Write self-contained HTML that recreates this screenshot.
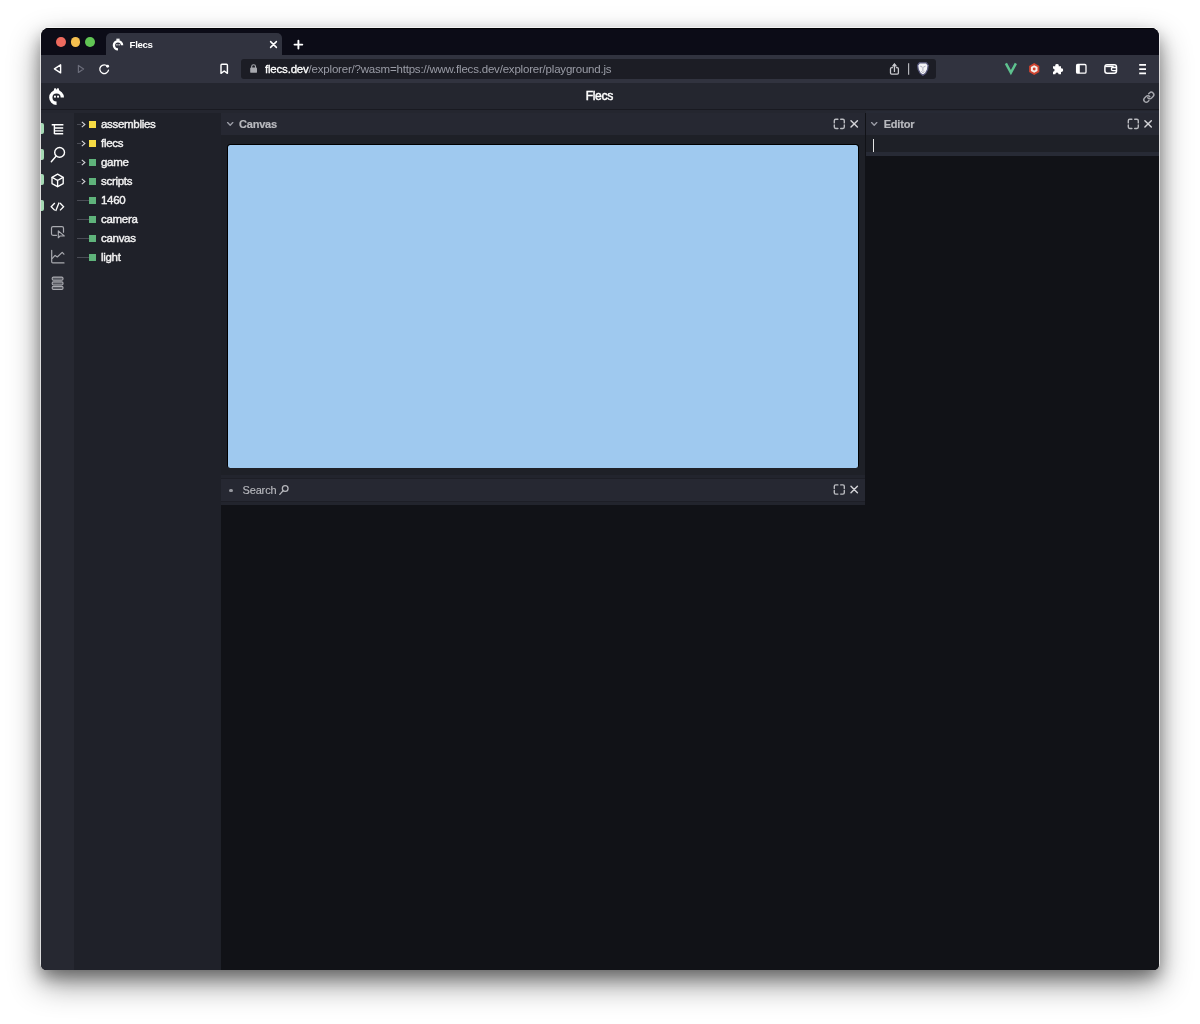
<!DOCTYPE html>
<html lang="en">
<head>
<meta charset="utf-8">
<title>Flecs</title>
<style>
*{box-sizing:border-box;margin:0;padding:0}
html,body{width:1200px;height:1024px;background:#fff;overflow:hidden}
body{position:relative;font-family:"Liberation Sans",sans-serif;color:#e6e6e6}
.abs{position:absolute}
#shadow{position:absolute;left:41px;top:28px;width:1118px;height:941px;border-radius:8px 8px 5.5px 5.5px;
 box-shadow:0 0 0 1px rgba(255,255,255,.62),0 8px 16px rgba(0,0,0,.35),0 14px 32px rgba(0,0,0,.45);}
#win{will-change:transform;position:absolute;left:41px;top:28px;width:1118px;height:941.5px;border-radius:8px 8px 5.5px 5.5px;overflow:hidden;background:#111217}
/* browser chrome */
#tabbar{position:absolute;left:0;top:0;width:1118px;height:27px;background:#0c0c17;border-top:1px solid #020204}
.tl{position:absolute;top:9.3px;width:9.8px;height:9.8px;border-radius:50%}
#tab{position:absolute;left:65.3px;top:5.2px;width:176px;height:22.3px;background:#31333f;border-radius:5px 5px 0 0}
#tabtitle{position:absolute;left:88.6px;top:10.4px;font-size:9.7px;font-weight:700;color:#fff;line-height:13px;letter-spacing:-.35px}
#toolbar{position:absolute;left:0;top:26.8px;width:1118px;height:27.9px;background:#31333f}
#url{position:absolute;left:200px;top:31px;width:695px;height:19.6px;background:#1c1d25;border-radius:3px}
#urltext{position:absolute;left:224px;top:34.5px;font-size:11.5px;line-height:13px;color:#9a9ca6;white-space:nowrap;letter-spacing:-.2px}
#urltext b{color:#fff;font-weight:400;-webkit-text-stroke:.3px #fff}
/* app */
#apphead{position:absolute;left:0;top:54px;width:1118px;height:32px;background:#24262f}
#appline{position:absolute;left:0;top:81.3px;width:1118px;height:1.1px;background:#191a21}
#apptitle{position:absolute;left:-.7px;width:1118px;top:61px;text-align:center;font-size:12.2px;line-height:14px;color:#fff;letter-spacing:-.35px;-webkit-text-stroke:.45px #fff}
#strip{position:absolute;left:0;top:84.6px;width:33px;height:860px;background:#262831}
#tree{position:absolute;left:33px;top:84.6px;width:147px;height:860px;background:#1f2129}
#main{position:absolute;left:180px;top:82.5px;width:938px;height:860px;background:#111217}
.pill{position:absolute;left:0;width:3px;height:11px;background:#a5d9b4;border-radius:0 2px 2px 0}
.row{position:absolute;left:60px;font-size:11.5px;line-height:14px;color:#f2f2f2;white-space:nowrap;letter-spacing:-.3px;-webkit-text-stroke:.4px #f2f2f2}
.sq{position:absolute;left:48px;width:7px;height:7px}
.ln{position:absolute;left:36px;height:1px;background:#4a4c55}
.band{position:absolute;background:#22242d}
.phead{position:absolute;background:#262832;height:22px}
.ptitle{position:absolute;font-size:11px;line-height:13px;font-weight:700;color:#b8b9be;white-space:nowrap;letter-spacing:-.2px;-webkit-text-stroke:.2px #b8b9be}
.pbody{position:absolute;background:#1e2027}
svg{position:absolute;overflow:visible}
</style>
</head>
<body>
<div id="shadow"></div>
<div id="win">
  <div id="apphead"></div>
  <div id="tabbar"></div>
  <div class="tl" style="left:14.9px;background:#ed6a5e"></div>
  <div class="tl" style="left:29.7px;background:#f5bf4f"></div>
  <div class="tl" style="left:44.4px;background:#61c554"></div>
  <div id="tab"></div>
  <div id="tabtitle">Flecs</div>
  <div id="toolbar"></div>
  <div id="url"></div>
  <div id="urltext"><b>flecs.dev</b>/explorer/?wasm=https://www.flecs.dev/explorer/playground.js</div>

  <div id="appline"></div>
  <div id="apptitle">Flecs</div>

    <div id="strip"></div>
  <div id="tree"></div>
  <div class="ln" style="top:95.95px;width:3.6px"></div>
  <svg style="left:40px;top:93.15px" width="5" height="7" viewBox="0 0 5 7"><path d="M0.8 0.9 L3.9 3.5 L0.8 6.1" fill="none" stroke="#d4d4d8" stroke-width="1.1"/></svg>
  <div class="sq" style="top:93.15px;background:#f6db44"></div>
  <div class="row" style="top:89.05px">assemblies</div>
  <div class="ln" style="top:114.98px;width:3.6px"></div>
  <svg style="left:40px;top:112.18px" width="5" height="7" viewBox="0 0 5 7"><path d="M0.8 0.9 L3.9 3.5 L0.8 6.1" fill="none" stroke="#d4d4d8" stroke-width="1.1"/></svg>
  <div class="sq" style="top:112.18px;background:#f6db44"></div>
  <div class="row" style="top:108.08px">flecs</div>
  <div class="ln" style="top:134.01px;width:3.6px"></div>
  <svg style="left:40px;top:131.21px" width="5" height="7" viewBox="0 0 5 7"><path d="M0.8 0.9 L3.9 3.5 L0.8 6.1" fill="none" stroke="#d4d4d8" stroke-width="1.1"/></svg>
  <div class="sq" style="top:131.21px;background:#5fb37b"></div>
  <div class="row" style="top:127.11px">game</div>
  <div class="ln" style="top:153.04px;width:3.6px"></div>
  <svg style="left:40px;top:150.24px" width="5" height="7" viewBox="0 0 5 7"><path d="M0.8 0.9 L3.9 3.5 L0.8 6.1" fill="none" stroke="#d4d4d8" stroke-width="1.1"/></svg>
  <div class="sq" style="top:150.24px;background:#5fb37b"></div>
  <div class="row" style="top:146.14px">scripts</div>
  <div class="ln" style="top:172.07px;width:11.5px"></div>
  <div class="sq" style="top:169.27px;background:#5fb37b"></div>
  <div class="row" style="top:165.17px">1460</div>
  <div class="ln" style="top:191.10px;width:11.5px"></div>
  <div class="sq" style="top:188.30px;background:#5fb37b"></div>
  <div class="row" style="top:184.20px">camera</div>
  <div class="ln" style="top:210.13px;width:11.5px"></div>
  <div class="sq" style="top:207.33px;background:#5fb37b"></div>
  <div class="row" style="top:203.23px">canvas</div>
  <div class="ln" style="top:229.16px;width:11.5px"></div>
  <div class="sq" style="top:226.36px;background:#5fb37b"></div>
  <div class="row" style="top:222.26px">light</div>
  <!-- pills -->
  <div class="pill" style="top:95px"></div>
  <div class="pill" style="top:120.6px"></div>
  <div class="pill" style="top:146.2px"></div>
  <div class="pill" style="top:171.8px"></div>
  <div id="main">
    <!-- Canvas panel: main origin is (221,110.5) abs -->
    <div class="band" style="left:0;top:0;width:938px;height:2.5px;background:#24262f"></div>
    <div class="phead" style="left:0;top:2.5px;width:644.2px"></div>
    <div class="ptitle" style="left:18px;top:7px">Canvas</div>
    <div class="pbody" style="left:0;top:24.5px;width:644.2px;height:340px"></div>
    <div class="abs" style="left:6px;top:33.7px;width:632px;height:324.3px;background:#000;border-radius:3.5px"></div>
    <div class="abs" style="left:7.1px;top:34.7px;width:630.1px;height:322.4px;background:#9fc9ef;border-radius:2.5px"></div>
    <!-- Search panel -->
    <div class="band" style="left:0;top:364.5px;width:644.2px;height:29.5px"></div>
    <div class="abs" style="left:0;top:367.5px;width:644.2px;height:1px;background:#1d1e26"></div>
    <div class="phead" style="left:0;top:368.5px;width:644.2px;height:21.7px"></div>
    <div class="abs" style="left:0;top:390.2px;width:644.2px;height:1px;background:#1d1e26"></div>
    <div class="abs" style="left:8.2px;top:378.1px;width:3.4px;height:3.4px;border-radius:50%;background:#96989f"></div>
    <div class="ptitle" style="left:21.5px;top:373.5px;font-weight:400;color:#b6b7bc;-webkit-text-stroke:.15px #b6b7bc;letter-spacing:-.15px">Search</div>
    <!-- Editor panel -->
    <div class="band" style="left:645.2px;top:0;width:293.3px;height:45.3px;background:#272a35"></div>
    <div class="phead" style="left:645.2px;top:2.5px;width:293.3px"></div>
    <div class="ptitle" style="left:662.7px;top:7px">Editor</div>
    <div class="pbody" style="left:645.2px;top:24.5px;width:293.3px;height:17.3px"></div>
    <div class="abs" style="left:651.5px;top:28.5px;width:1.5px;height:12.5px;background:#e4e4e4"></div>
  </div>
  <!-- overlay icons in absolute page coordinates -->
  <svg id="ico" style="left:-41px;top:-28px" width="1200" height="1024" viewBox="0 0 1200 1024" fill="none" stroke-linecap="round" stroke-linejoin="round">
    <!-- sidebar: list-tree -->
    <g stroke="#fff" stroke-width="1.4" stroke-linecap="butt">
      <path d="M51.7 124.7H63.4M54.4 124.7V134M54.4 128H63.2M54.4 130.9H63.2M54.4 133.8H63.2"/>
    </g>
    <!-- sidebar: search -->
    <g stroke="#fff" stroke-width="1.4">
      <circle cx="59.6" cy="152.4" r="4.9"/><path d="M56 156.2L51.3 161.7"/>
    </g>
    <!-- sidebar: cube -->
    <g stroke="#fff" stroke-width="1.35">
      <path d="M57.6 174.2L63.2 177.3V183.6L57.6 186.7L52 183.6V177.3Z"/>
      <path d="M52.2 177.4L57.6 180.5L63 177.4M57.6 180.5V186.5"/>
    </g>
    <!-- sidebar: code -->
    <g stroke="#fff" stroke-width="1.3" stroke-linejoin="miter" stroke-linecap="butt">
      <path d="M54.8 203L51.2 206.7L54.8 210.4M60 203L63.6 206.7L60 210.4M59.1 202.4L55.7 211"/>
    </g>
    <!-- sidebar: inspect -->
    <g stroke="#a9aab0" stroke-width="1.2">
      <path d="M56.5 235.3H53Q51.5 235.3 51.5 233.8V228.2Q51.5 226.7 53 226.7H62Q63.5 226.7 63.5 228.2V232.2"/>
      <path d="M58.3 230.9V237.8L60 236L64.3 236Z" stroke-width="1.1"/>
    </g>
    <!-- sidebar: graph -->
    <g stroke="#a9aab0" stroke-width="1.2">
      <path d="M51.7 250.3V261.8Q51.7 262.9 52.8 262.9H64"/>
      <path d="M52.3 258.3L55.1 255.4L57.3 257L62.2 252.4L63.9 254.2"/>
    </g>
    <!-- sidebar: server -->
    <g stroke="#a9aab0" stroke-width="1.1" fill="#55575f">
      <rect x="52.2" y="277.1" width="10.8" height="3.1" rx="1.2"/>
      <rect x="52.2" y="281.9" width="10.8" height="3.1" rx="1.2"/>
      <rect x="52.2" y="286.4" width="10.8" height="3.1" rx="1.2"/>
    </g>
    <!-- flecs logo (header) -->
    <g id="logo">
      <path d="M62.3 97.5A5.75 5.75 0 1 0 56.55 103.25" stroke="#fff" stroke-width="3.3" stroke-linecap="butt"/>
      <path d="M53.7 91.4L54.2 88.6Q54.3 88.3 54.7 88.3H55.6Q56 88.3 56.1 88.7L56.5 90L56.9 88.7Q57 88.3 57.4 88.3H58.3Q58.7 88.3 58.8 88.6L59.4 91.4Z" fill="#fff" stroke="none"/>
      <rect x="54" y="95.7" width="1.9" height="1.9" fill="#fff" stroke="none"/>
      <rect x="57.1" y="95.7" width="1.9" height="1.9" fill="#fff" stroke="none"/>
    </g>
    <!-- favicon -->
    <g>
      <path d="M122.1 45.3A4.1 4.1 0 1 0 118 49.4" stroke="#fff" stroke-width="2.4" stroke-linecap="butt"/>
      <path d="M116.2 40.6L116.6 38.5H117.6L118 39.4L118.4 38.5H119.4L119.8 40.6Z" fill="#fff" stroke="none"/>
      <rect x="116.3" y="44.2" width="1.3" height="1.2" fill="#fff" stroke="none"/>
      <rect x="118.5" y="44.2" width="1.3" height="1.2" fill="#fff" stroke="none"/>
    </g>
    <!-- tab close, new tab -->
    <path d="M270.6 41.6L276.4 47.4M276.4 41.6L270.6 47.4" stroke="#fff" stroke-width="1.5"/>
    <path d="M294.5 44.6H302.3M298.4 40.7V48.5" stroke="#fff" stroke-width="1.9"/>
    <!-- nav -->
    <path d="M54.4 68.85L60.6 64.8V72.9Z" stroke="#fff" stroke-width="1.4"/>
    <path d="M83.6 68.9L78.4 65.4V72.5Z" stroke="#6b6d7a" stroke-width="1.2"/>
    <path d="M107.6 66.4A4.4 4.4 0 1 0 108.5 70.2" stroke="#fff" stroke-width="1.3"/>
    <circle cx="107.6" cy="66.3" r="1.45" fill="#fff" stroke="none"/>
    <!-- bookmark -->
    <path d="M221 65.2Q221 64.3 221.9 64.3H226.5Q227.4 64.3 227.4 65.2V73.3L224.2 71L221 73.3Z" stroke="#fff" stroke-width="1.45"/>
    <!-- lock -->
    <rect x="250.2" y="67.6" width="6.8" height="5.2" rx="0.9" fill="#a7a8ae" stroke="none"/>
    <path d="M251.7 67.8V66.6A1.9 1.9 0 0 1 255.5 66.6V67.8" stroke="#a7a8ae" stroke-width="1.1"/>
    <!-- share -->
    <path d="M892.4 67.7H891.6Q890.5 67.7 890.5 68.8V73Q890.5 74.1 891.6 74.1H897.3Q898.4 74.1 898.4 73V68.8Q898.4 67.7 897.3 67.7H896.5" stroke="#c9c9ce" stroke-width="1.3"/>
    <path d="M894.45 71.4V64.6" stroke="#c9c9ce" stroke-width="1.3"/><path d="M892.4 66L894.45 63.3L896.5 66Z" fill="#c9c9ce" stroke="#c9c9ce" stroke-width="0.6"/>
    <path d="M908.6 63.2V74.8" stroke="#b4b5ba" stroke-width="1.2" stroke-linecap="butt"/>
    <!-- brave lion -->
    <path d="M919.4 62.8H926.4L928.2 65.3L927.6 69.5L925.6 73.2L922.9 75.3L920.2 73.2L918.2 69.5L917.6 65.3Z" fill="#f4f4f6" stroke="#55567a" stroke-width="1.3"/>
    <path d="M920.6 66.3L922.2 67.1M925.2 66.3L923.6 67.1M922.9 68V70.5M921.6 71.6L922.9 72.6L924.2 71.6" stroke="#8a8ba0" stroke-width="0.7"/>
    <!-- vue -->
    <path d="M1005.9 63.4L1010.9 72.6L1015.9 63.4" stroke="#5ec28f" stroke-width="2.5" stroke-linejoin="miter" stroke-linecap="butt"/>
    <path d="M1008.9 63.4L1010.9 67L1012.9 63.4" stroke="#363a52" stroke-width="1.2" stroke-linejoin="miter" stroke-linecap="butt"/>
    <!-- red hex -->
    <path d="M1034.2 63.1L1039.3 66V72L1034.2 75L1029.1 72V66Z" fill="#cf432f" stroke="none"/>
    <path d="M1034.2 65.2L1037.5 67.1V70.9L1034.2 72.8L1030.9 70.9V67.1Z" fill="#f3ede9" stroke="none"/>
    <circle cx="1034.2" cy="69" r="1.45" fill="#d2402c" stroke="none"/>
    <!-- puzzle -->
    <path d="M1053 66.2H1055.3A1.75 1.75 0 1 1 1058.7 66.2H1061V68.4A1.75 1.75 0 1 1 1061 71.8V74.2H1058.6A1.6 1.6 0 1 0 1055.4 74.2H1053V71.7A1.6 1.6 0 1 0 1053 68.5Z" fill="#fff" stroke="none"/>
    <!-- sidebar toggle -->
    <rect x="1076.6" y="64.5" width="9.4" height="8.6" rx="1.2" stroke="#fff" stroke-width="1.3"/>
    <rect x="1076.6" y="64.5" width="3.2" height="8.6" fill="#fff" stroke="none"/>
    <!-- wallet -->
    <rect x="1104.9" y="64.7" width="11.6" height="8.6" rx="2.2" stroke="#fff" stroke-width="1.5"/>
    <path d="M1116.4 67.5H1112.9A1.55 1.55 0 0 0 1112.9 70.6H1116.4" stroke="#fff" stroke-width="1.3"/>
    <path d="M1105.2 66.4H1113.6" stroke="#fff" stroke-width="1.5" stroke-linecap="butt"/>
    <!-- hamburger -->
    <path d="M1139.2 64.9H1146M1139.2 69.1H1146M1139.2 73.3H1146" stroke="#fff" stroke-width="1.65" stroke-linecap="butt"/>
    <!-- link -->
    <g stroke="#a6a7ad" stroke-width="2.9" transform="translate(1142.8 91.2) scale(0.5)">
      <path d="M10 13a5 5 0 0 0 7.54.54l3-3a5 5 0 0 0-7.07-7.07l-1.72 1.71"/>
      <path d="M14 11a5 5 0 0 0-7.54-.54l-3 3a5 5 0 0 0 7.07 7.07l1.71-1.71"/>
    </g>
    <!-- panel icons -->
    <path d="M834.3 122.9V120.7Q834.3 119.3 835.7 119.3H837.9M840.7 119.3H842.9Q844.3 119.3 844.3 120.7V122.9M844.3 124.9V127.1Q844.3 128.5 842.9 128.5H840.7M837.9 128.5H835.7Q834.3 128.5 834.3 127.1V124.9" stroke="#b9babf" stroke-width="1.4"/>
    <path d="M851.0 120.7L857.4 127.1M857.4 120.7L851.0 127.1" stroke="#d2d2d6" stroke-width="1.45"/>
    <path d="M834.3 488.5V486.3Q834.3 484.9 835.7 484.9H837.9M840.7 484.9H842.9Q844.3 484.9 844.3 486.3V488.5M844.3 490.5V492.7Q844.3 494.1 842.9 494.1H840.7M837.9 494.1H835.7Q834.3 494.1 834.3 492.7V490.5" stroke="#b9babf" stroke-width="1.4"/>
    <path d="M851.0 486.3L857.4 492.7M857.4 486.3L851.0 492.7" stroke="#d2d2d6" stroke-width="1.45"/>
    <path d="M1128.3 122.9V120.7Q1128.3 119.3 1129.7 119.3H1131.9M1134.7 119.3H1136.9Q1138.3 119.3 1138.3 120.7V122.9M1138.3 124.9V127.1Q1138.3 128.5 1136.9 128.5H1134.7M1131.9 128.5H1129.7Q1128.3 128.5 1128.3 127.1V124.9" stroke="#b9babf" stroke-width="1.4"/>
    <path d="M1144.9 120.7L1151.3 127.1M1151.3 120.7L1144.9 127.1" stroke="#d2d2d6" stroke-width="1.45"/>
    <!-- panel chevrons -->
    <path d="M227.6 122.6L230.2 125.2L232.8 122.6" stroke="#9b9da6" stroke-width="1.35"/>
    <path d="M871.6 122.6L874.2 125.2L876.8 122.6" stroke="#9b9da6" stroke-width="1.35"/>
    <!-- search panel magnifier -->
    <circle cx="285.2" cy="488.5" r="2.85" stroke="#b6b7bc" stroke-width="1.3"/>
    <path d="M283.1 490.8L279.8 494.4" stroke="#b6b7bc" stroke-width="1.3"/>
  </svg>
</div>
</body>
</html>
